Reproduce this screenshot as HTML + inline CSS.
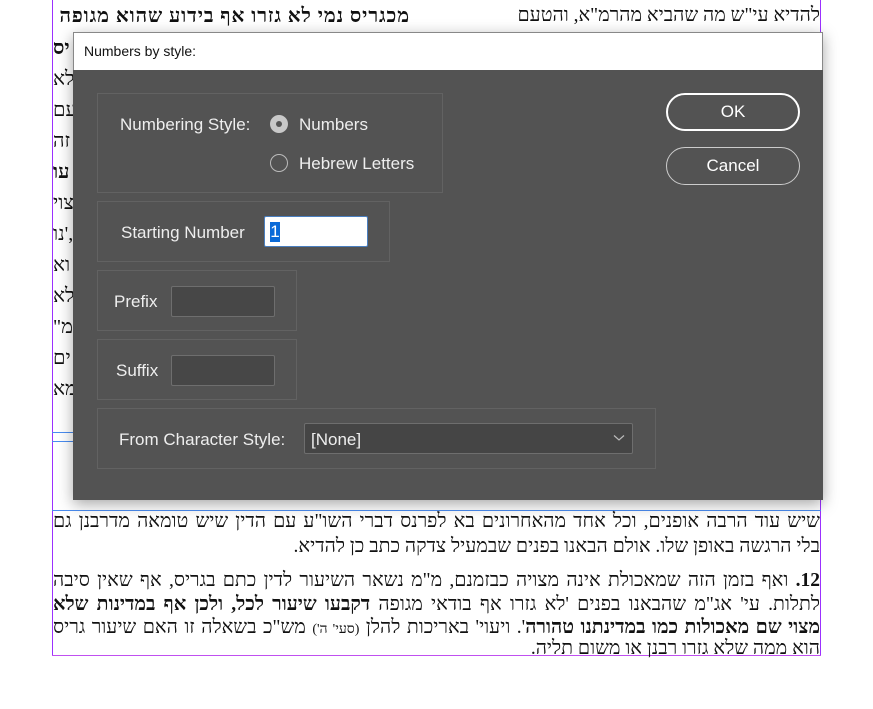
<!DOCTYPE html>
<html><head><meta charset="utf-8"><style>
*{margin:0;padding:0;box-sizing:border-box}
body{width:873px;height:709px;background:#fff;position:relative;overflow:hidden;font-family:"Liberation Sans",sans-serif}
.heb{font-family:"Liberation Serif","Noto Serif CJK SC",serif;position:absolute;direction:rtl;color:#111;white-space:nowrap}
.frag{left:53px;font-size:20px;direction:ltr}
.ln{position:absolute;left:53px;width:767px;direction:rtl;font-family:"Liberation Serif",serif;font-size:19.5px;line-height:24px;color:#111;white-space:nowrap;text-align:justify;text-align-last:justify;height:26px;overflow:hidden}
.ln.r{text-align-last:right}
.a{position:absolute}
.box{position:absolute;border:1px solid #626262}
.lbl{position:absolute;color:#eee;font-size:17px;white-space:nowrap}
.inp{position:absolute;background:#474747;border:1px solid #6e6e6e;border-radius:2px}
.radio{position:absolute;width:18px;height:18px;border-radius:50%;border:1.5px solid #bbb}
</style></head><body>
<div class="a" style="left:52px;top:0;width:1px;height:655px;background:#9b30ff"></div>
<div class="a" style="left:820px;top:0;width:1px;height:655px;background:#9b30ff"></div>
<div class="a" style="left:52px;top:655px;width:769px;height:1px;background:#c050f0"></div>
<div class="a" style="left:52px;top:432px;width:30px;height:1px;background:#4a8cf0"></div>
<div class="a" style="left:52px;top:441px;width:30px;height:1px;background:#4a8cf0"></div>
<div class="a" style="left:52px;top:510px;width:769px;height:1px;background:#4a8cf0"></div>

<div class="heb" style="right:53px;top:5px;font-size:19.5px">להדיא עי"ש מה שהביא מהרמ"א, והטעם</div>
<div class="heb" style="right:463px;top:5px;font-size:20px;font-weight:bold;letter-spacing:0.9px">מכגריס נמי לא גזרו אף בידוע שהוא מגופה</div>
<div class="heb frag" style="top:37px;font-weight:bold">יס</div>
<div class="heb frag" style="top:68px">לא</div>
<div class="heb frag" style="top:99px">עם</div>
<div class="heb frag" style="top:130px">זה</div>
<div class="heb frag" style="top:161px;font-weight:bold">עו</div>
<div class="heb frag" style="top:192px">צוי</div>
<div class="heb frag" style="top:223px">נו',</div>
<div class="heb frag" style="top:254px">וא</div>
<div class="heb frag" style="top:285px">לא</div>
<div class="heb frag" style="top:316px">"מ</div>
<div class="heb frag" style="top:347px">ים</div>
<div class="heb frag" style="top:378px">מא</div>

<div class="ln" style="top:510px">שיש עוד הרבה אופנים, וכל אחד מהאחרונים בא לפרנס דברי השו"ע עם הדין שיש טומאה מדרבנן גם</div>
<div class="ln r" style="top:535px">בלי הרגשה באופן שלו. אולם הבאנו בפנים שבמעיל צדקה כתב כן להדיא.</div>
<div class="ln" style="top:569px"><b>12.</b> ואף בזמן הזה שמאכולת אינה מצויה כבזמנם, מ"מ נשאר השיעור לדין כתם בגריס, אף שאין סיבה</div>
<div class="ln" style="top:593px">לתלות. עי' אג"מ שהבאנו בפנים 'לא גזרו אף בודאי מגופה <b>דקבעו שיעור לכל, ולכן אף במדינות שלא</b></div>
<div class="ln" style="top:616px"><b>מצוי שם מאכולות כמו במדינתנו טהורה</b>'. ויעוי' באריכות להלן <span style="font-size:14px">(סעי' ה')</span> מש"כ בשאלה זו האם שיעור גריס</div>
<div class="ln r" style="top:637px">הוא ממה שלא גזרו רבנן או משום תליה.</div>

<!-- dialog -->
<div class="a" style="left:73px;top:32px;width:750px;height:468px;box-shadow:0 4px 14px rgba(0,0,0,.35);border:1px solid #888"></div>
<div class="a" style="left:73px;top:32px;width:750px;height:38px;background:#fff;border:1px solid #888;border-bottom:none"></div>
<div class="a" style="left:84px;top:43px;font-size:14px;color:#111">Numbers by style:</div>
<div class="a" style="left:73px;top:70px;width:750px;height:430px;background:#535353"></div>

<div class="box" style="left:97px;top:93px;width:346px;height:100px"></div>
<div class="lbl" style="left:120px;top:115px">Numbering Style:</div>
<div class="radio" style="left:270px;top:115px;background:#c8c8c8;border-color:#c8c8c8"></div>
<div class="a" style="left:276px;top:121px;width:6px;height:6px;border-radius:50%;background:#555"></div>
<div class="lbl" style="left:299px;top:115px">Numbers</div>
<div class="radio" style="left:270px;top:154px"></div>
<div class="lbl" style="left:299px;top:154px">Hebrew Letters</div>

<div class="box" style="left:97px;top:201px;width:293px;height:61px"></div>
<div class="lbl" style="left:121px;top:223px">Starting Number</div>
<div class="a" style="left:264px;top:216px;width:104px;height:31px;background:#fff;border:1.5px solid #4a7fc0;border-radius:2px"></div>
<div class="a" style="left:270px;top:222px;width:10px;height:20px;background:#0a6ad8;color:#fff;font-size:17px;line-height:20px;text-align:center">1</div>

<div class="box" style="left:97px;top:270px;width:200px;height:61px"></div>
<div class="lbl" style="left:114px;top:292px">Prefix</div>
<div class="inp" style="left:171px;top:286px;width:104px;height:31px"></div>

<div class="box" style="left:97px;top:339px;width:200px;height:61px"></div>
<div class="lbl" style="left:116px;top:361px">Suffix</div>
<div class="inp" style="left:171px;top:355px;width:104px;height:31px"></div>

<div class="box" style="left:97px;top:408px;width:559px;height:61px"></div>
<div class="lbl" style="left:119px;top:430px">From Character Style:</div>
<div class="inp" style="left:304px;top:423px;width:329px;height:31px;background:#454545"></div>
<div class="lbl" style="left:311px;top:430px">[None]</div>
<svg class="a" style="left:613px;top:434px" width="12" height="8"><path d="M1 1.5 L6 6 L11 1.5" stroke="#bbb" stroke-width="1.2" fill="none"/></svg>

<div class="a" style="left:666px;top:93px;width:134px;height:38px;border:2.5px solid #fff;border-radius:19px;color:#fff;font-size:17px;text-align:center;line-height:33px">OK</div>
<div class="a" style="left:666px;top:147px;width:134px;height:38px;border:1px solid #ccc;border-radius:19px;color:#fff;font-size:17px;text-align:center;line-height:36px">Cancel</div>
</body></html>
